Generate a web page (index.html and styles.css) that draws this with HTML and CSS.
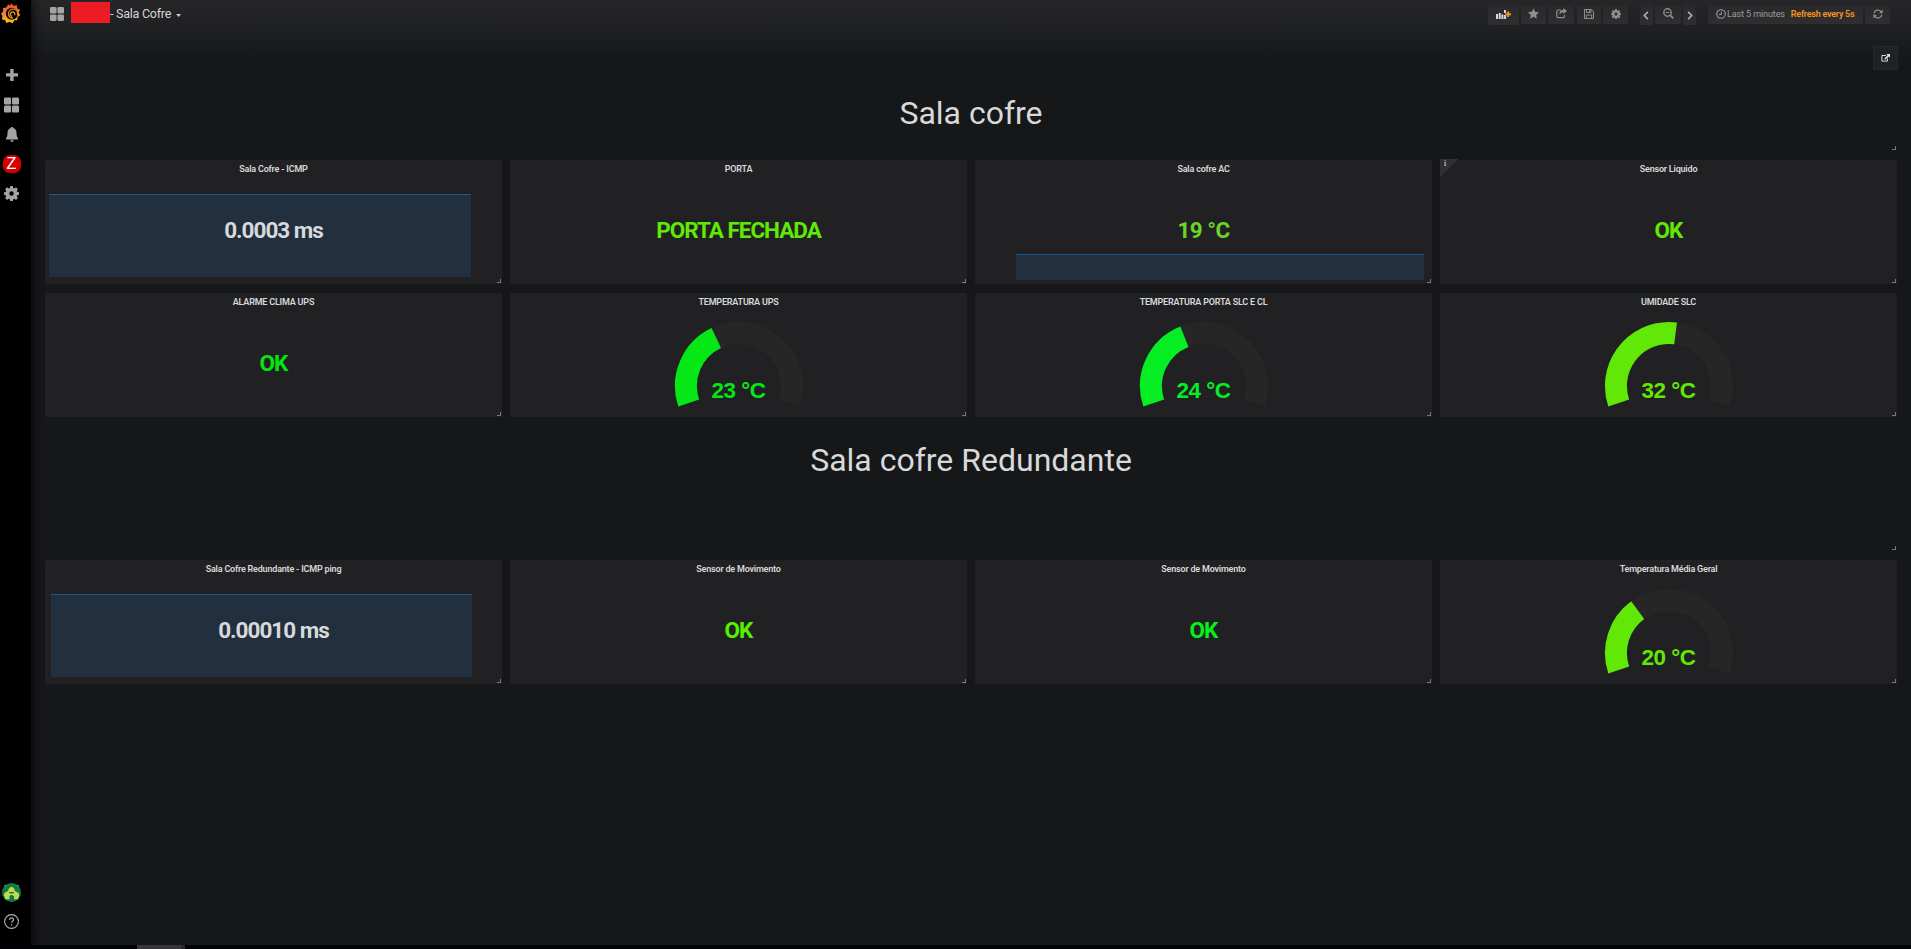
FILE: index.html
```html
<!DOCTYPE html>
<html lang="pt-BR">
<head>
<meta charset="utf-8">
<title>Sala Cofre</title>
<link rel="stylesheet" href="styles.css">
</head>
<body>
<svg class="defs" width="0" height="0">
  <defs>
    <linearGradient id="flame" gradientUnits="userSpaceOnUse" x1="0" y1="0" x2="0" y2="21"><stop offset="0" stop-color="#ef4e28"/><stop offset=".55" stop-color="#f58a25"/><stop offset="1" stop-color="#fcd20b"/></linearGradient>
    <symbol id="gear" viewBox="0 0 16 16"><path fill-rule="evenodd" d="M6.6 0h2.800l.4 2.100 1.200.5 1.800-1.200 2 2-1.200 1.800.5 1.200 2 .3v2.700l-2 .4-.5 1.200 1.200 1.800-2 2-1.800-1.200-1.200.5-.4 2H6.600l-.4-2-1.200-.5-1.800 1.200-2-2 1.200-1.800-.5-1.200-2-.4V6.700l2-.3.5-1.200L1.200 3.400l2-2L5 2.600l1.200-.5zM8 5.600a2.400 2.400 0 1 0 0 4.800 2.400 2.400 0 0 0 0-4.800z"/></symbol>
    <symbol id="tiles" viewBox="0 0 16 16"><rect width="7.500" height="7.500" rx="1.300"/><rect x="8.500" width="7.500" height="7.500" rx="1.300"/><rect y="8.500" width="7.500" height="7.500" rx="1.300"/><rect x="8.500" y="8.500" width="7.500" height="7.500" rx="1.300"/></symbol>
  </defs>
</svg>

<div class="app">
  <nav class="sidemenu">
    <a class="logo"><svg width="20" height="21" viewBox="0 0 20 21"><path fill="url(#flame)" d="M10.500.3l1.800 2.400 3.600-.5.300 3.200 3 1.400-1.500 2.600 1.600 2.900-2.700 1.700-.4 3.200-2.800.1-1.900 3-2.900-1.500-3.400 1.300-1.100-3-3.200-.7.500-3.200L0 10.500l2.200-2.100-.3-3.500 3.400-.4 1.700-3 2.200.9z"/><circle cx="10.800" cy="10.700" r="6" fill="#000"/><path d="M17 12.500c-.5-.8-.3-1.500-.5-2.500A4.500 4.500 0 1 0 12 15.200" fill="none" stroke="url(#flame)" stroke-width="1.300"/><path d="M13.600 12.200a2.200 2.200 0 1 0-2.500 1.100" fill="none" stroke="#f79a20" stroke-width="1.200"/></svg></a>
    <a class="item"><svg width="12" height="12" viewBox="0 0 12 12"><path d="M4.200 0h3.400v4.200H12v3.400H7.600V12H4.200V7.600H0V4.200h4.200z"/></svg></a>
    <a class="item"><svg width="15" height="16"><use href="#tiles"/></svg></a>
    <a class="item"><svg width="12" height="15" viewBox="0 0 12 15"><path d="M6 0c.8 0 1.200.5 1.300 1.100C9.400 1.700 10.500 3.400 10.500 5.500c0 3.300.5 4.800 1.500 5.600v1.500H0v-1.500c1-.8 1.500-2.300 1.500-5.600 0-2.100 1.100-3.800 3.200-4.400C4.800.5 5.200 0 6 0zM4.200 13.300h3.600C7.600 14.400 6.900 15 6 15s-1.600-.6-1.800-1.700z"/></svg></a>
    <a class="item low"><span class="zabbix">Z</span></a>
    <a class="item low"><svg width="15" height="15"><use href="#gear"/></svg></a>
    <span class="spacer"></span>
    <a class="item"><svg width="19" height="19" viewBox="0 0 19 19"><circle cx="9.500" cy="9.500" r="9.500" fill="#0f7a43"/><path fill="#c3d94e" d="M8.500 4h2l1.500 1.500 1 2.500 3.500 2 .8 2-1.300 4.200h-4V13L9.500 12l-2 1v3.200H3.500L1.700 12l.8-2L6 8l1-2.500z"/><path d="M6.500 9h6l-1.500 1.500H8zM8 12.500h3V19H8z" fill="#0f7a43"/><path d="M2.500 3l1.500-.5M15.200 2.500l1.500.5" stroke="#c3d94e"/></svg></a>
    <a class="item"><svg width="15" height="15" viewBox="0 0 15 15" fill="none" stroke="#b4b4b4"><circle cx="7.500" cy="7.500" r="6.900" stroke-width="1.100"/><path d="M5.600 5.900c0-2.700 3.900-2.500 3.900-.2 0 1.500-1.900 1.500-1.900 3.100M7.600 10.200v1.300" stroke-width="1.200"/></svg></a>
  </nav>

  <main class="main">
    <header class="navbar">
      <svg class="nav-tiles" width="14" height="14"><use href="#tiles"/></svg>
      <span class="redacted"></span>
      <span class="nav-title">- Sala Cofre</span>
      <span class="caret"></span>
      <div class="tools">
        <a class="btn tall w30"><svg width="15" height="9" viewBox="0 0 15 9"><path fill="#d8d9da" d="M0 4h2v5H0zM2.700 3h2v6h-2zM5.400 4.500h2V9h-2zM8.100 5h2v4h-2zM8 0h2v3H8z"/><path fill="#f79520" d="M11.200 1.500h1.900v1.800H15v1.900h-1.900V7h-1.900V5.200H9.300V3.300h1.900z"/></svg></a>
        <a class="btn w25"><svg width="11" height="11" viewBox="0 0 22 21"><path d="M11 0l3.300 7 7.700 1-5.600 5.300L17.800 21 11 17.200 4.200 21l1.400-7.700L0 8l7.700-1z"/></svg></a>
        <a class="btn w26"><svg width="11" height="11" viewBox="0 0 11 11"><path d="M5 2H2.200Q.8 2 .8 3.400v4.800Q.8 9.600 2.200 9.600h4.900q1.400 0 1.400-1.400V7" fill="none" stroke="#8e8e8e" stroke-width="1.200"/><path d="M7.300 0L11 3 7.300 6V4.200C5 4.200 4 5 4.300 7.200 2.500 4.500 3.800 1.900 7.300 1.900z"/></svg></a>
        <a class="btn w24"><svg width="10" height="10" viewBox="0 0 10 10" fill="none" stroke="#8e8e8e"><path d="M.5.500h7l2 2v7h-9zM2.500.5v3h4.500v-3M2.300 9.500V6h5.400v3.500"/><path d="M5.700 1v2"/></svg></a>
        <a class="btn w25"><svg width="10" height="10"><use href="#gear"/></svg></a>
        <a class="btn tall w13 first"><svg width="6" height="9" viewBox="0 0 6 9"><path d="M4.900.9L1.300 4.500l3.600 3.600" fill="none" stroke="#b0b0b0" stroke-width="1.600"/></svg></a>
        <a class="btn w26"><svg width="11" height="11" viewBox="0 0 11 11" fill="none" stroke="#8e8e8e"><circle cx="4.500" cy="4.500" r="3.700" stroke-width="1.400"/><path d="M7.200 7.200l3.100 3.100" stroke-width="1.800"/><path d="M2.700 4.500h3.600"/></svg></a>
        <a class="btn tall w13"><svg width="6" height="9" viewBox="0 0 6 9"><path d="M1.100.9l3.600 3.600-3.600 3.600" fill="none" stroke="#b0b0b0" stroke-width="1.600"/></svg></a>
        <a class="btn time first"><svg width="10" height="10" viewBox="0 0 10 10" fill="none" stroke="#9a9a9a"><circle cx="5" cy="5" r="4.300" stroke-width="1.100"/><path d="M5.300 2.500v3H3"/></svg><span class="range">Last 5 minutes</span><span class="every">Refresh every 5s</span></a>
        <a class="btn w25"><svg width="10" height="10" viewBox="0 0 10 10"><path d="M1 4.300A4 4 0 0 1 8 2.500M9 5.700A4 4 0 0 1 2 7.500" fill="none" stroke="#8e8e8e" stroke-width="1.300"/><path d="M9.700.5v3.700H6zM.3 9.500V5.800H4z"/></svg></a>
      </div>
    </header>

    <div class="links"><a class="link-btn"><svg width="9" height="8" viewBox="0 0 9 8"><path d="M5 1.500H.9v5.600h5.600V4.500" fill="none" stroke="#d8d9da"/><path d="M5.200 0H9v3.600L7.800 2.500 4.300 5.700l-1-1L6.600 1.300z" fill="#e3e3e3"/></svg></a></div>

    <section class="grid">
      <div class="heading"><h1>Sala cofre</h1><i class="grip"></i></div>

      <article class="panel"><h2>Sala Cofre - ICMP</h2><div class="spark ping-a"></div><div class="value white">0.0003 ms</div><i class="grip"></i></article>
      <article class="panel"><h2>PORTA</h2><div class="value lime">PORTA FECHADA</div><i class="grip"></i></article>
      <article class="panel"><h2>Sala cofre AC</h2><div class="spark ac"></div><div class="value olive temp">19 °C</div><i class="grip"></i></article>
      <article class="panel"><h2>Sensor Liquido</h2><span class="info">i</span><div class="value lime">OK</div><i class="grip"></i></article>

      <article class="panel"><h2>ALARME CLIMA UPS</h2><div class="value green">OK</div><i class="grip"></i></article>
      <article class="panel"><h2>TEMPERATURA UPS</h2><svg class="gauge" width="130" height="90" viewBox="-65 -65 130 90"><path class="track" pathLength="60" d="M-50.260 17.010A53.060 53.060 0 1 1 50.260 17.010"/><path class="arc g1" pathLength="60" stroke-dasharray="23 100" d="M-50.260 17.010A53.060 53.060 0 1 1 50.260 17.010"/><text class="g1" x="-.5" y="11.500">23 °C</text></svg><i class="grip"></i></article>
      <article class="panel"><h2>TEMPERATURA PORTA SLC E CL</h2><svg class="gauge" width="130" height="90" viewBox="-65 -65 130 90"><path class="track" pathLength="60" d="M-50.260 17.010A53.060 53.060 0 1 1 50.260 17.010"/><path class="arc g2" pathLength="60" stroke-dasharray="24 100" d="M-50.260 17.010A53.060 53.060 0 1 1 50.260 17.010"/><text class="g2" x="-.5" y="11.500">24 °C</text></svg><i class="grip"></i></article>
      <article class="panel"><h2>UMIDADE SLC</h2><svg class="gauge" width="130" height="90" viewBox="-65 -65 130 90"><path class="track" pathLength="60" d="M-50.260 17.010A53.060 53.060 0 1 1 50.260 17.010"/><path class="arc g3" pathLength="60" stroke-dasharray="32 100" d="M-50.260 17.010A53.060 53.060 0 1 1 50.260 17.010"/><text class="g3" x="-.5" y="11.500">32 °C</text></svg><i class="grip"></i></article>

      <div class="heading second"><h1>Sala cofre Redundante</h1><i class="grip"></i></div>

      <article class="panel"><h2>Sala Cofre Redundante - ICMP ping</h2><div class="spark ping-b"></div><div class="value white">0.00010 ms</div><i class="grip"></i></article>
      <article class="panel"><h2>Sensor de Movimento</h2><div class="value lime2">OK</div><i class="grip"></i></article>
      <article class="panel"><h2>Sensor de Movimento</h2><div class="value green2">OK</div><i class="grip"></i></article>
      <article class="panel"><h2>Temperatura Média Geral</h2><svg class="gauge" width="130" height="90" viewBox="-65 -65 130 90"><path class="track" pathLength="60" d="M-50.260 17.010A53.060 53.060 0 1 1 50.260 17.010"/><path class="arc g3" pathLength="60" stroke-dasharray="20 100" d="M-50.260 17.010A53.060 53.060 0 1 1 50.260 17.010"/><text class="g3" x="-.5" y="11.500">20 °C</text></svg><i class="grip"></i></article>
    </section>
  </main>
</div>
<footer class="strip"><span class="thumb"></span></footer>
</body>
</html>
```

FILE: styles.css
```css
* { box-sizing: border-box; }
body {
  margin: 0;
  height: 949px;
  overflow: hidden;
  display: flex;
  flex-direction: column;
  background: #161719;
  color: #d8d9da;
  font-family: Roboto, "Liberation Sans", sans-serif;
}
.defs { position: absolute; }
.app { flex: 1; display: flex; }

/* side menu */
.sidemenu {
  width: 31px;
  background: #000;
  display: flex;
  flex-direction: column;
  padding-bottom: 8.500px;
  box-shadow: 0 0 12px #000;
  z-index: 1;
}
.sidemenu a { width: 23px; display: flex; align-items: center; justify-content: center; fill: #a4a4a4; }
.logo { height: 60.600px; padding-bottom: 33px; padding-right: 2px; }
.item { height: 29.400px; }
.item.low { padding-top: 1px; }
.spacer { flex: 1; }
.zabbix {
  width: 18px;
  height: 18px;
  border-radius: 7px;
  background: #d40000;
  color: #fff;
  font: 16px/18px "Liberation Sans", sans-serif;
  text-align: center;
}

/* top bar */
.main { flex: 1; background: linear-gradient(#262628 0, #1f2022 28px, #161719 60px); }
.navbar { height: 28px; display: flex; align-items: flex-start; padding: 0 21px 0 19px; fill: #a4a4a4; }
.nav-tiles { margin-top: 7px; }
.redacted { width: 39px; height: 21px; margin: 2px 0 0 7px; background: #ed1c24; }
.nav-title { font-size: 12.500px; line-height: 15px; margin-top: 6px; letter-spacing: -.25px; white-space: nowrap; color: #d6d6d7; }
.caret { width: 5px; height: 3px; margin: 14px 0 0 5px; background: #c7c7c7; clip-path: polygon(0 0, 100% 0, 50% 100%); }
.tools { margin-left: auto; display: flex; gap: 2.300px; padding-top: 4px; fill: #8e8e8e; }
.btn {
  height: 19px;
  margin-top: 1px;
  padding-bottom: 2px;
  display: flex;
  align-items: center;
  justify-content: center;
  border-radius: 1px;
  background: linear-gradient(#29292b, #2f2f32);
}
.btn.tall { height: 21px; margin-top: 0; padding-bottom: 0; }
.btn.w13 { width: 13px; padding-top: 2px; }
.w24 { width: 24.500px; }
.w25 { width: 25px; }
.w26 { width: 26px; }
.w30 { width: 30.500px; }
.btn.first { margin-left: 9.100px; }
.time { width: 155px; font-size: 9px; letter-spacing: -.1px; white-space: nowrap; }
.range { margin: 1px 6px 0 1px; color: #9c9c9c; }
.every { margin-top: 1px; color: #f79520; font-weight: 600; letter-spacing: -.25px; }

.links { height: 49px; padding: 18px 13px 0 0; display: flex; justify-content: flex-end; }
.link-btn { width: 25px; height: 24px; background: #202125; border: 1px solid #26272a; display: flex; align-items: center; justify-content: center; }

/* dashboard grid */
.grid {
  display: grid;
  grid-template-columns: repeat(4, 1fr);
  grid-template-rows: 74px 124px 124px 125px 124px;
  gap: 9px 8px;
  padding: 0 14px;
}
.heading { grid-column: 1 / -1; position: relative; text-align: center; }
.heading h1 { margin: 18px 0 0; font-size: 32px; line-height: 36px; font-weight: 400; }
.heading.second h1 { margin-top: 16px; }
.panel { position: relative; background: #212124; border-radius: 1px; display: flex; flex-direction: column; align-items: center; }
.panel h2 { margin: 3px 0 0; font-size: 9px; line-height: 12px; font-weight: 600; letter-spacing: -.2px; white-space: nowrap; }
.value { position: relative; margin-top: 42px; font-size: 22.500px; line-height: 26px; font-weight: 700; letter-spacing: -1px; white-space: nowrap; }
.value.temp { letter-spacing: -.55px; }
.grip { position: absolute; right: 1px; bottom: 1px; width: 4px; height: 4px; border: solid #77787a; border-width: 0 1px 1px 0; }

.white { color: #d8d9da; }
.lime { color: #61e806; }
.lime2 { color: #54f000; }
.olive { color: #6ad52a; }
.green { color: #05e60f; }
.green2 { color: #05f01c; }

/* sparklines lie behind the value */
.spark { position: absolute; background: #212f3e; border-top: 1px solid #1f5687; }
.ping-a { left: 4px; top: 34px; width: 422px; height: 83px; }
.ping-b { left: 6px; top: 34px; width: 421px; height: 83px; }
.ac { left: 41px; top: 94px; width: 408px; height: 26px; }

.info { position: absolute; left: 0; top: -1px; width: 18px; height: 18px; padding-left: 4px; background: linear-gradient(135deg, #303033 50%, transparent 50%); font: 700 8px/9px "Liberation Serif", serif; color: #b4b4b4; }

.gauge { margin-top: 12.800px; }
.track, .arc { fill: none; stroke-width: 22; }
.track { stroke: #262626; }
.arc.g1 { stroke: #05e816; }
.arc.g2 { stroke: #05ee24; }
.arc.g3 { stroke: #61e806; }
.gauge text { font: 700 22.400px "Liberation Sans", Arial, sans-serif; text-anchor: middle; letter-spacing: -.4px; }
text.g1 { fill: #05e816; }
text.g2 { fill: #05ee24; }
text.g3 { fill: #61e806; }

.strip { height: 4px; background: #020306; padding-left: 137px; }
.thumb { display: block; width: 48px; height: 4px; background: #37373b; border-right: 4px solid #28282b; }
```
